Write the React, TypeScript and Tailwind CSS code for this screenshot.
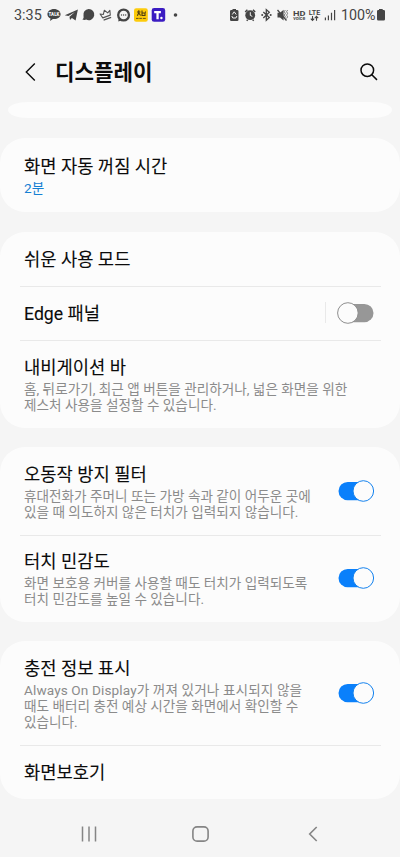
import { useState } from 'react';

interface Setting {
  title: string;
  lines?: string[];
  accent?: boolean;
  on?: boolean;
  split?: boolean;
  height: string;
}

const GROUPS: Setting[][] = [
  [{ title: '화면 자동 꺼짐 시간', lines: ['2분'], accent: true, height: 'h-[74px]' }],
  [
    { title: '쉬운 사용 모드', height: 'h-[54px]' },
    { title: 'Edge 패널', on: false, split: true, height: 'h-[54.5px]' },
    {
      title: '내비게이션 바',
      lines: ['홈, 뒤로가기, 최근 앱 버튼을 관리하거나, 넓은 화면을 위한', '제스처 사용을 설정할 수 있습니다.'],
      height: 'h-[87.5px]',
    },
  ],
  [
    {
      title: '오동작 방지 필터',
      lines: ['휴대전화가 주머니 또는 가방 속과 같이 어두운 곳에', '있을 때 의도하지 않은 터치가 입력되지 않습니다.'],
      on: true,
      height: 'h-[87.5px]',
    },
    {
      title: '터치 민감도',
      lines: ['화면 보호용 커버를 사용할 때도 터치가 입력되도록', '터치 민감도를 높일 수 있습니다.'],
      on: true,
      height: 'h-[87px]',
    },
  ],
  [
    {
      title: '충전 정보 표시',
      lines: ['Always On Display가 꺼져 있거나 표시되지 않을', '때도 배터리 충전 예상 시간을 화면에서 확인할 수', '있습니다.'],
      on: true,
      height: 'h-[103.5px]',
    },
    { title: '화면보호기', height: 'h-[54.5px]' },
  ],
];

function Toggle({ initial, label }: { initial: boolean; label: string }) {
  const [on, setOn] = useState(initial);
  return (
    <button role="switch" aria-checked={on} aria-label={label} onClick={() => setOn(!on)} className="h-[22px] w-[37px] shrink-0">
      <svg viewBox="0 0 37 22" className="block h-[22px] w-[37px]">
        <rect x="1.5" y="1.9" width="35" height="18.4" rx="9.2" fill={on ? '#0a80fb' : '#979797'} />
        <circle cx={on ? 26.3 : 10.9} cy="11" r="10.3" fill="#fcfcfc" stroke={on ? '#1683ee' : '#8e8e8e'} strokeWidth="1" />
      </svg>
    </button>
  );
}

function Row({ item, first }: { item: Setting; first: boolean }) {
  return (
    <div className={`flex items-center pr-[26px] pl-6 ${item.height}`}>
      {!first && <div className="-mr-[357px] -ml-1 h-full w-[361px] shrink-0 border-t border-[#e9e9e9]" />}
      <div className={item.lines ? 'flex min-w-0 flex-1 flex-col gap-px pt-px whitespace-nowrap' : 'min-w-0 flex-1 pt-0.5 whitespace-nowrap'}>
        <h2 className="text-[17.7px] leading-6 text-[#0b0b0b] [-webkit-text-stroke:0.1px_#0b0b0b]">{item.title}</h2>
        {item.lines && (
          <p className={item.accent ? 'text-[13.6px] leading-4 text-[#1580d3]' : 'text-[13.6px] leading-4 tracking-[0.02px] text-[#8b8b8b]'}>
            {item.lines.map((line) => (
              <span key={line} className={line.startsWith('Always') ? 'block tracking-[0.12px]' : 'block'}>
                {line}
              </span>
            ))}
          </p>
        )}
      </div>
      {item.split && <div className="mr-[11px] h-[21px] w-px bg-[#e9e9e9]" />}
      {item.on !== undefined && <Toggle initial={item.on} label={item.title} />}
    </div>
  );
}

function StatusBar() {
  return (
    <header className="flex h-[30px] shrink-0 items-center pl-[14px] text-[#454545]">
      <span className="w-[33px] pt-px text-[14.4px] leading-[30px]">3:35</span>
      {/* notifications */}
      <svg width="134" height="30" viewBox="47 0 134 30" fill="#454545">
        <path d="M54 9c-3.8 0-6.6 2.3-6.6 5.2 0 1.9 1.2 3.4 3.1 4.3l-.5 2.5 2.9-2h1.1c3.8 0 6.600-2 6.600-4.800S57.800 9 54 9Z" />
        <text x="54" y="16" textAnchor="middle" fontSize="4.500" fontWeight="900" fill="#f4f4f4">TALK</text>
        <path d="m64.800 15.200 13.100-5.700-2.300 11-3.700-2.500-1.900 2-.5-3.300 5.400-4.800-6.500 4.200Z" />
        <path d="M88.600 9a5.600 5.600 0 1 1-2.400 10.600c-1.500.6-2.800.4-3.900-.4 1.400-.4 1.500-1.800 1.200-3.200A5.600 5.600 0 0 1 88.600 9Z" />
        <g fill="none" stroke="#555" strokeWidth="1.100" strokeLinejoin="round" transform="rotate(-20 106 15)">
          <path d="m102 16.600-1.200-4.600 2.900 1.600 2.300-3.600 2.300 3.600 2.900-1.600-1.200 4.600Z" />
          <path d="M102 19h8" />
        </g>
        <circle cx="123.600" cy="15" r="5.400" fill="none" stroke="#454545" strokeWidth="2.300" />
        <path d="m118.600 18.500-.3 3 3-1Z" />
        <circle cx="121.500" cy="15" r=".7" />
        <circle cx="123.600" cy="15" r=".7" />
        <circle cx="125.700" cy="15" r=".7" />
        <rect x="134" y="8.300" width="13.800" height="13.500" rx="2.200" fill="#fdcb0b" />
        <path d="M137 12h3.500M138.800 10.300v2.500l-1.500 3M138.800 13l1.800 2.500M142 10.500v5h3v-2.500h-3M145 12h1" fill="none" stroke="#4b3b16" strokeWidth="1.100" />
        <path d="M136 18.400h2.600M139.300 18.400h2.600M142.800 18.400h3" stroke="#66501a" strokeWidth="1" />
        <rect x="151.700" y="8.100" width="13.500" height="13.700" rx="2.400" fill="#3b1cc2" />
        <path d="M154.200 11h6.700v2.200h-2.200v6h-2.300v-6h-2.200Z" fill="#fff" />
        <circle cx="161.400" cy="18" r="1.200" fill="#fff" />
        <circle cx="175.500" cy="15" r="1.800" />
      </svg>
      {/* system */}
      <svg width="108" height="30" viewBox="229 0 108 30" className="ml-[48px]" fill="#454545">
        <path d="M232.500 9h3.500v1h1.200q1.300 0 1.300 1.300v8.400q0 1.300-1.300 1.300h-5.900q-1.300 0-1.300-1.300v-8.400q0-1.300 1.300-1.300h1.200Z" />
        <path d="m232.300 14.500 1.900-2.700 2 2.700M231.800 16l1 2h3.100l1-2" fill="none" stroke="#f5f5f5" strokeWidth="1" />
        <circle cx="250.200" cy="15.200" r="4.900" />
        <path d="m245.200 12 2.200-2.200M255.200 12 253 9.800M246.700 20.700l1-1M253.700 20.700l-1-1" stroke="#454545" strokeWidth="1.500" />
        <path d="M250.300 12.200v3.200l2 1" fill="none" stroke="#f5f5f5" strokeWidth="1" />
        <path d="m263.300 12 6 5.600-3 2.700V9.600l3 2.700-6 5.600" fill="none" stroke="#454545" strokeWidth="1.300" />
        <circle cx="262.200" cy="15" r="1" />
        <circle cx="270.700" cy="15" r="1" />
        <path d="M277.500 12.800h2.500l3.600-3v10.600l-3.600-3h-2.500Z" />
        <path d="m277.500 10 9 10.500" stroke="#454545" strokeWidth="1.300" />
        <path d="m285.300 10-1 1.700 1 1.700-1 1.700 1 1.700-1 1.700M287.600 10l-1 1.700 1 1.700-1 1.700 1 1.700-1 1.700" fill="none" stroke="#555" strokeWidth=".8" />
        <text x="292.900" y="15.500" fontSize="7.600" fontWeight="700" textLength="12.500" lengthAdjust="spacingAndGlyphs">HD</text>
        <text x="293.200" y="20.200" fontSize="4.600" fontWeight="600" textLength="12" lengthAdjust="spacingAndGlyphs">voice</text>
        <text x="308.700" y="15.200" fontSize="7.600" fontWeight="600" textLength="11.500" lengthAdjust="spacingAndGlyphs">LTE</text>
        <path d="M312.500 16v4.300m-1.700-1.600 1.700 1.800 1.700-1.800M316.500 20.800v-4.300m-1.700 1.600 1.700-1.800 1.700 1.800" fill="none" stroke="#454545" strokeWidth="1.100" />
        <path d="M324.800 17.500h1.200v2.700h-1.200zM327.800 15.500h1.200v4.700h-1.200zM330.900 12.700h1.200v7.500h-1.200zM334 10h1.200v10.200H334z" />
      </svg>
      <span className="ml-1 w-[35px] text-[14.3px] leading-[30px] whitespace-nowrap">100%</span>
      <svg width="10" height="14" viewBox="0 0 10 14" fill="#454545">
        <path d="M3 1h3.700v1h1q1.300 0 1.300 1.300v8q0 1.300-1.300 1.300H2.300Q1 12.600 1 11.300v-8Q1 2 2.300 2H3Z" />
      </svg>
    </header>
  );
}

export default function App() {
  return (
    <div className="flex h-[857px] w-[400px] flex-col overflow-hidden bg-[#f5f5f5] font-[Roboto,'Noto_Sans_CJK_KR',sans-serif]" lang="ko">
      <StatusBar />
      <div className="flex h-[72px] shrink-0 items-center pt-[11px] pr-[22px] pl-[25px]">
        <svg width="12" height="20" viewBox="0 0 12 20" fill="none" stroke="#0b0b0b" strokeWidth="1.4">
          <path d="M9.800 1.600 1.300 10l8.500 8.400" />
        </svg>
        <h1 className="ml-[18px] flex-1 pt-0.5 text-[21.2px] leading-8 font-bold text-[#0b0b0b]">디스플레이</h1>
        <svg width="18" height="18" viewBox="0 0 18 18" fill="none" stroke="#0b0b0b" strokeWidth="1.500">
          <circle cx="7.300" cy="7.200" r="6.300" />
          <path d="m11.800 11.700 5.200 5.200" />
        </svg>
      </div>
      {/* tail of the card scrolled under the title */}
      <div className="mx-2 mb-5 h-4 shrink-0 rounded-[20px/8px] bg-[#fcfcfc]" />
      <main className="flex flex-col gap-[19.500px]">
        {GROUPS.map((group) => (
          <section key={group[0].title} className="rounded-[25px] bg-[#fcfcfc]">
            {group.map((item, i) => (
              <Row key={item.title} item={item} first={i === 0} />
            ))}
          </section>
        ))}
      </main>
      <nav className="flex flex-1 items-center pt-3 pl-[81px] text-[#858585]">
        <svg width="16" height="16" viewBox="0 0 16 16" stroke="currentColor" strokeWidth="1.500">
          <path d="M1.500 .5v15M8 .5v15M14.500 .5v15" />
        </svg>
        <svg width="17" height="16" viewBox="0 0 17 16" fill="none" stroke="currentColor" strokeWidth="1.600" className="ml-[95px]">
          <rect x=".9" y=".9" width="15.200" height="14.200" rx="4.200" />
        </svg>
        <svg width="10" height="16" viewBox="0 0 10 16" fill="none" stroke="currentColor" strokeWidth="1.600" className="ml-[99px]">
          <path d="M8.700 1 1.700 8l7 7" />
        </svg>
      </nav>
    </div>
  );
}
